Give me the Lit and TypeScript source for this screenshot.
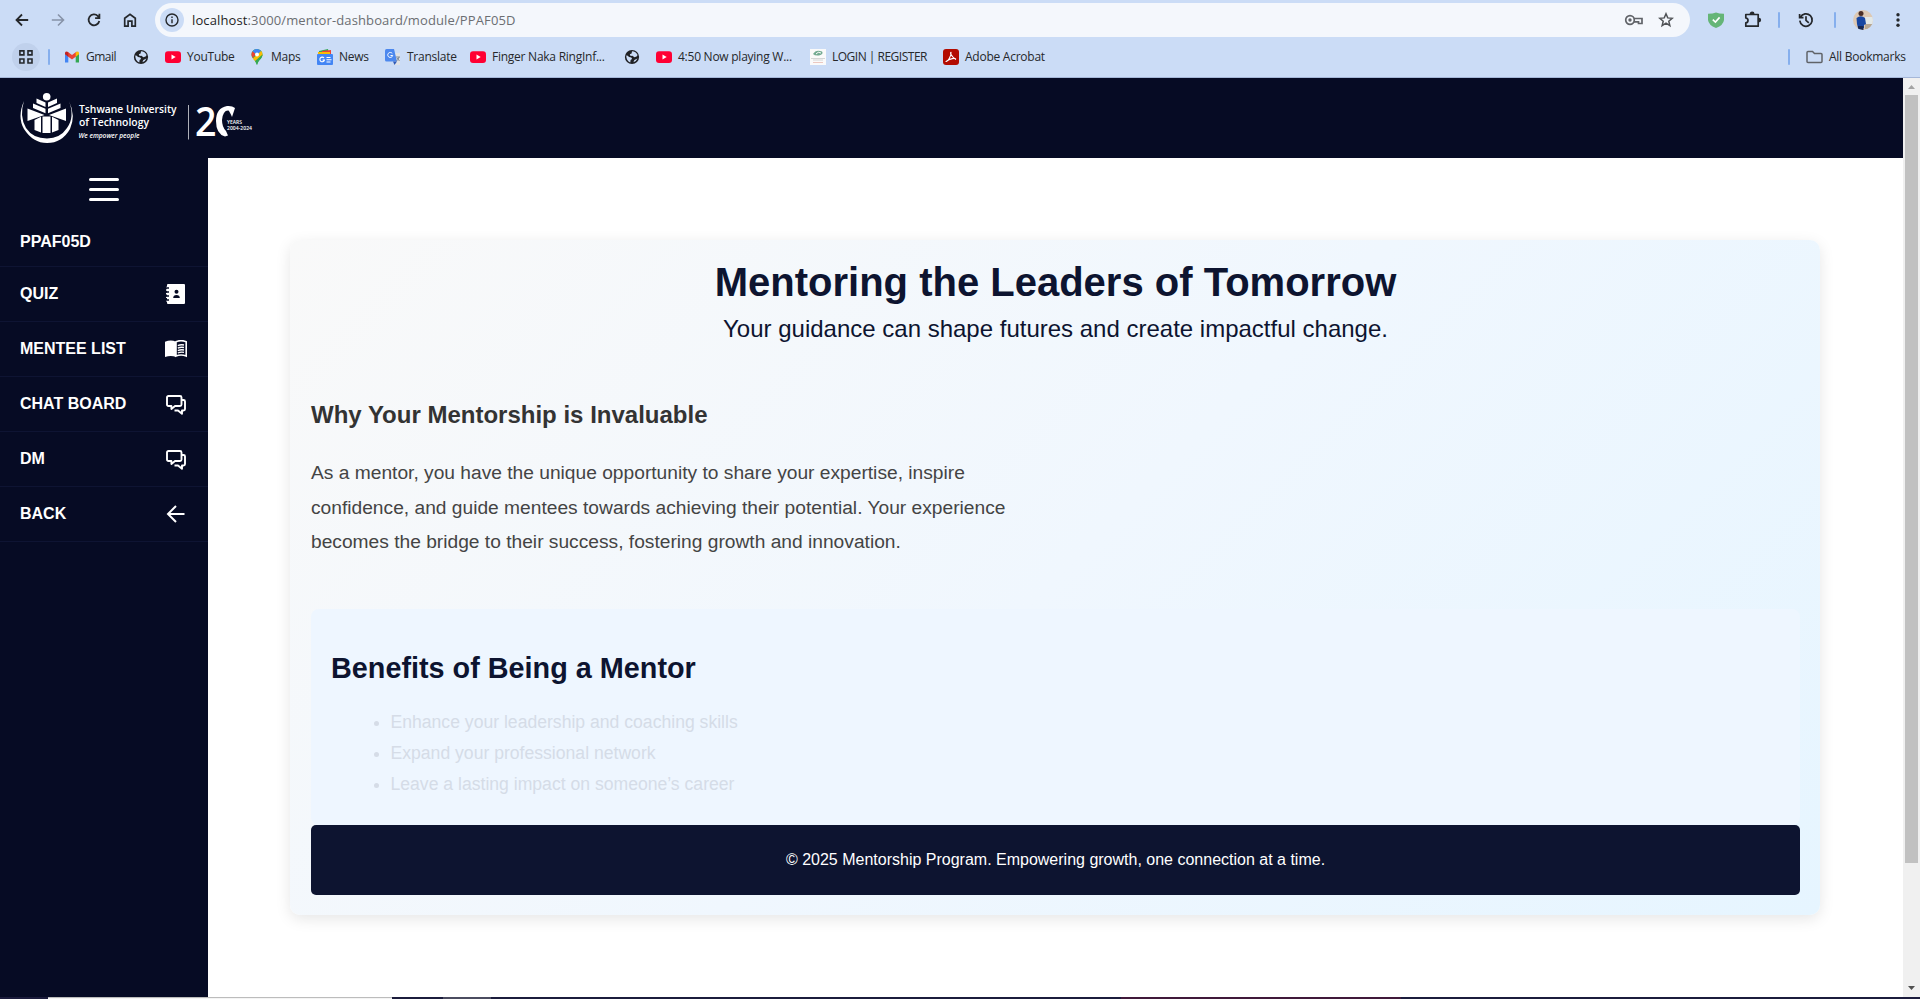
import { LitElement, html, css } from "lit";
import { customElement } from "lit/decorators.js";

const globe = html`<svg width="16" height="16" viewBox="0 0 16 16"><circle cx="8" cy="8" r="7.1" fill="#202124"/><path d="M2.200 6.600Q4 6.600 5 8Q8 8 8 10L6.600 11L6.300 13.600Q2.400 12 2.200 6.600Z M8 2.200Q12 2.400 13.600 6L12.600 7.600L10.400 8.200L8.400 6.800L6.600 7L5.800 5.200L7.600 4.400Z M9.400 13.200L10.400 11L13.400 9.600Q12.600 12.400 9.400 13.200Z" fill="#cbdcf6"/></svg>`;
const youtube = html`<svg width="16" height="16" viewBox="0 0 16 16"><rect y="2.300" width="16" height="11.600" rx="3" fill="#f03"/><path d="M6.500 5.600v5l4.200-2.500z" fill="#fff"/></svg>`;
const chat = html`<svg class="chat" width="20" height="20" viewBox="0 0 20 20" fill="none" stroke="#fff" stroke-width="1.900" stroke-linejoin="round"><path d="M2.500 1h11.500q1.500 0 1.500 1.500v7q0 1.500-1.500 1.500H9l-3.600 3V11H2.500Q1 11 1 9.500v-7Q1 1 2.500 1z"/><path d="M16 5h1.500Q19 5 19 6.500v7.500q0 1.500-1.500 1.500H16v3.300L12 15.500H8.500"/></svg>`;

@customElement("browser-bar")
export class BrowserBar extends LitElement {
  static styles = css`
    :host { display: block; height: 77px; background: #cbdcf6; border-bottom: 1px solid #a5b7d8; font: 12px "Open Sans", "Noto Sans", sans-serif; color: #26282b; overflow: hidden; }
    svg { display: block; flex: none; }
    .bar { display: flex; align-items: center; height: 40px; }
    .nav { display: flex; gap: 16px; padding: 0 14px 0 12px; }
    .omni { display: flex; align-items: center; flex: 1; height: 34px; border-radius: 17px; background: #f4f7fc; padding: 0 16px 0 5px; box-sizing: border-box; margin-left: 1px; }
    .info { width: 24px; height: 24px; border-radius: 50%; background: #cbdcf6; display: grid; place-items: center; margin-right: 8px; }
    .url { flex: 1; font-size: 13px; letter-spacing: 0.12px; color: #6b6e72; }
    .url b { font-weight: 400; color: #1f1f1f; }
    .acts { display: flex; gap: 14px; align-items: center; }
    .tools { display: flex; align-items: center; padding-left: 17px; width: 213px; }
    .sep { width: 2px; height: 16px; background: #86afed; border-radius: 1px; flex: none; }
    .puzzle { margin-left: 18px; }
    .s1 { margin-left: 15px; }
    .hist, .face, .more { margin-left: 17px; }
    .s2 { margin-left: 19px; }
    .s3 { margin-right: 14px; }
    .s4 { margin-right: 16px; }
    .marks { display: flex; align-items: center; height: 34px; }
    .apps { width: 28px; height: 28px; border-radius: 50%; background: #c0d1ec; display: grid; place-items: center; margin: 0 8px 0 12px; }
    .m { display: flex; align-items: center; white-space: nowrap; box-sizing: border-box; }
    .m span { margin: -1px 0 0 6px; letter-spacing: -0.25px; }
    .m .tight { letter-spacing: -0.5px; }
    .fill { flex: 1; }
  `;
  mark(icon: unknown, text: string, width: number, tight = false) {
    return html`<div class="m" style="width:${width}px">${icon}${text ? html`<span class=${tight ? "tight" : ""}>${text}</span>` : ""}</div>`;
  }
  render() {
    return html`
      <div class="bar">
        <div class="nav">
          <svg width="20" height="20" viewBox="0 0 20 20" fill="none" stroke="#25282c" stroke-width="1.800"><path d="M16.200 10H4.800M10 4.500L4.500 10l5.500 5.500"/></svg>
          <svg width="20" height="20" viewBox="0 0 20 20" fill="none" stroke="#8793a8" stroke-width="1.600"><path d="M3.800 10h11.400M10 4.500l5.500 5.500-5.500 5.500"/></svg>
          <svg width="20" height="20" viewBox="0 0 20 20" fill="none" stroke="#25282c" stroke-width="1.800"><path d="M15.300 11a5.400 5.400 0 1 1-1.400-4.900l1.300 1.500M15.400 3.800v4.300h-4.300"/></svg>
          <svg width="20" height="20" viewBox="0 0 20 20" fill="none" stroke="#25282c" stroke-width="1.700"><path d="M4.700 8.200L10 4.200l5.300 4v7.900h-3.400v-4.900H8.100v4.900H4.700z"/></svg>
        </div>
        <div class="omni">
          <div class="info"><svg width="16" height="16" viewBox="0 0 16 16" fill="none" stroke="#25282c" stroke-width="1.400"><circle cx="8" cy="8" r="6"/><path d="M8 7.200v4M8 4.600v1.500"/></svg></div>
          <div class="url"><b>localhost</b>:3000/mentor-dashboard/module/PPAF05D</div>
          <div class="acts">
            <svg width="20" height="16" viewBox="0 0 20 16" fill="none" stroke="#606368" stroke-width="1.700"><circle cx="6" cy="8" r="4.300"/><circle cx="6" cy="8" r="1.700" fill="#606368" stroke="none"/><path d="M10 6.500h8v5h-3.500V9.800H10"/></svg>
            <svg width="16" height="16" viewBox="0 0 16 16" fill="none" stroke="#505357" stroke-width="1.500"><path d="M8 1.800l1.750 4.100 4.450.4-3.400 2.900 1.050 4.400L8 11.200l-3.850 2.400L5.200 9.200 1.800 6.300l4.450-.4z"/></svg>
          </div>
        </div>
        <div class="tools">
          <svg width="18" height="18" viewBox="0 0 18 18"><path d="M9 1.400Q12 2.500 17 2.700V9Q16.500 14 9 17Q1.500 14 1 9V2.700Q6 2.500 9 1.400Z" fill="#65b577"/><path d="M5.800 8.600l2.600 2.500 4.200-4.700" fill="none" stroke="#fff" stroke-width="1.600"/></svg>
          <svg class="puzzle" width="20" height="20" viewBox="0 0 20 20" fill="none" stroke="#25282c" stroke-width="1.700"><path d="M2.800 4.500h12.400v11.700H2.800v-3.300q2.200-.5 2.200-2.500t-2.200-2.500z" stroke-linejoin="round"/><path d="M7.500 4a1.600 1.600 0 0 1 3.200 0zM15.700 8.500a1.600 1.600 0 0 1 0 3.200z" fill="#25282c"/></svg>
          <div class="sep s1"></div>
          <svg class="hist" width="18" height="18" viewBox="0 0 18 18" fill="none" stroke="#25282c" stroke-width="1.700"><path d="M3.400 6.300a6.200 6.200 0 1 1-.6 3.400M2.600 3v3.700h3.900M9 5.300V9.300l2.800 2.500"/></svg>
          <div class="sep s2"></div>
          <svg class="face" width="20" height="20" viewBox="0 0 20 20"><defs><clipPath id="av"><circle cx="10" cy="10" r="10"/></clipPath></defs><g clip-path="url(#av)"><rect width="20" height="20" fill="#ddc9b4"/><path d="M12 7h8v7h-8z" fill="#e2e8e8"/><path d="M12 14h8v5h-8z" fill="#b6a692"/><path d="M3.500 8Q8 4.500 12 8l1 6-2 1v3H5l-1-4z" fill="#1746a2"/><path d="M5 16h5.500v4H5z" fill="#182852"/><circle cx="8" cy="3.500" r="2.500" fill="#4b2e27"/></g></svg>
          <svg class="more" width="18" height="18" viewBox="0 0 18 18" fill="#25282c"><circle cx="8" cy="3.700" r="1.700"/><circle cx="8" cy="9" r="1.700"/><circle cx="8" cy="14.300" r="1.700"/></svg>
        </div>
      </div>
      <div class="marks">
        <div class="apps"><svg width="16" height="16" viewBox="0 0 16 16" fill="none" stroke="#25282c" stroke-width="1.600"><path d="M1.900 1.900h4v4h-4zM10 1.900h4v4h-4zM1.900 10h4v4h-4zM10 10h4v4h-4z"/></svg></div>
        <div class="sep s3"></div>
        ${this.mark(html`<svg width="16" height="16" viewBox="0 0 16 16"><path d="M1 4V13.500h3.300V6z" fill="#4285f4"/><path d="M11.700 6v7.500H15V4z" fill="#34a853"/><path d="M3.300 2.600L8 6.100l4.700-3.500V7L8 10.400 3.300 7z" fill="#ea4335"/><path d="M11.700 3.400Q15 1 15 4.500V5.200L11.700 7.700z" fill="#fbbc04"/><path d="M1 4.500Q1 1 4.300 3.400V7.700L1 5.200z" fill="#c5221f"/></svg>`, "Gmail", 69, true)}
        ${this.mark(globe, "", 32)}
        ${this.mark(youtube, "YouTube", 84)}
        ${this.mark(html`<svg width="16" height="16" viewBox="0 0 16 16"><path d="M8 0a5.500 5.500 0 0 1 5.500 5.500c0 4-4 5-5.500 10.500C6.500 10.500 2.500 9.500 2.500 5.500A5.500 5.500 0 0 1 8 0z" fill="#34a853"/><path d="M3.700 9.400L12 1.800Q14 4 13.300 7L7 13z" fill="#fbbc04"/><path d="M3.600 2.300L7 5 3.700 9Q1.200 5 3.600 2.300z" fill="#ea4335"/><path d="M3.600 2.300Q7.500-2 12 1.800L8 6z" fill="#4285f4"/><circle cx="8" cy="5.500" r="2" fill="#fff"/><path d="M8 16c1.500-5.500 5.500-6.500 5.500-10.500L6 12z" fill="#34a853"/></svg>`, "Maps", 68)}
        ${this.mark(html`<svg width="16" height="16" viewBox="0 0 16 16"><path d="M2 2l9-2 1 5H2z" fill="#34a853"/><path d="M5 2l9-1v5H5z" fill="#ea4335"/><path d="M1 3h12v4H1z" fill="#fbbc04"/><rect y="5" width="16" height="11" rx="1" fill="#4285f4"/><path d="M7 9a2.300 2.300 0 1 0 .4 2H5.500M9.500 8.500h4M9.500 10.700h5M9.500 13h4" fill="none" stroke="#fff" stroke-width="1.100"/></svg>`, "News", 68)}
        ${this.mark(html`<svg width="16" height="16" viewBox="0 0 16 16"><path d="M7 4h8v12H9z" fill="#e0e2e5"/><path d="M1.500 0H9l3 12.500H1.500Q0 12.500 0 11V1.500Q0 0 1.500 0z" fill="#4c88ee"/><path d="M8 12.500h4L9.500 16z" fill="#2f5bb9"/><path d="M7.300 4.500a2.500 2.500 0 1 0 .4 2H5.500" fill="none" stroke="#fff"/><path d="M11 8H15M14 8q-.5 2.500-2.500 4M12 9l2.500 3" fill="none" stroke="#77818e" stroke-width=".9"/></svg>`, "Translate", 85)}
        ${this.mark(youtube, "Finger Naka RingInf...", 154)}
        ${this.mark(globe, "", 32)}
        ${this.mark(youtube, "4:50 Now playing W...", 154)}
        ${this.mark(html`<svg width="16" height="16" viewBox="0 0 16 16"><path d="M0 0h16v16H0z" fill="#fafafa"/><path d="M3 5q3-5 9-2.500Q14 5 9 6.500 5 7 3 5z" fill="#73aa91"/><path d="M6 5q2-3 5-1" stroke="#fff" fill="none"/><path d="M1 9.500h14M3 11h10" stroke="#c9cccb" stroke-width=".8"/><path d="M3 13.500h10" stroke="#e7bbb2" stroke-width=".8"/></svg>`, "LOGIN | REGISTER", 133, true)}
        ${this.mark(html`<svg width="16" height="16" viewBox="0 0 16 16"><rect width="16" height="16" rx="3" fill="#b30b00"/><path d="M3.300 12.400c1.500.3 5.200-5.500 4.700-9-1-.2-.5 3.500 4.600 6.800.5-1.500-6-.7-9.300 2.200z" fill="none" stroke="#fff" stroke-width="1.100"/></svg>`, "Adobe Acrobat", 120)}
        <div class="fill"></div>
        <div class="sep s4"></div>
        ${this.mark(html`<svg width="17" height="16" viewBox="0 0 17 16" fill="none" stroke="#606368" stroke-width="1.500"><path d="M2 2.500h4.500l2 2H15q1 0 1 1v7q0 1-1 1H2q-1 0-1-1v-9q0-1 1-1z"/></svg>`, "All Bookmarks", 114)}
      </div>`;
  }
}

@customElement("tut-logo")
export class TutLogo extends LitElement {
  static styles = css`
    :host { display: flex; align-items: center; height: 80px; padding-left: 19px; color: #fff; }
    svg { display: block; overflow: visible; }
    text { fill: #fff; }
    .name { font: 600 10.5px "Open Sans", sans-serif; }
    .tag { font: italic 600 7px "Open Sans", sans-serif; }
    .big { font: 600 40px "Open Sans", sans-serif; }
    .yr { font: 600 4.500px "Open Sans", sans-serif; }
  `;
  render() {
    return html`<svg width="240" height="56" viewBox="19 90 240 56" fill="#fff">
      <path d="M24 101Q17 117 24 129Q33 143 47 143Q62 143 70 129Q76 116 69 101Q75 117 67 128Q60 138.500 47 138.500Q33 138.500 26 128Q19 116 24 101Z"/>
      <circle cx="46.700" cy="96.700" r="3.800"/>
      <path d="M36.500 98.500l9 4v4.500l-9-4zM57 98.500l-9 4v4.500l9-4zM33 103.500l12.500 5.200v4.500L33 108zM60.500 103.500L48 108.700v4.500L60.500 108zM27.500 108.500l17 6.500-17 6zM66 108.500l-17 6.500 17 6z"/>
      <path d="M34.500 120l6.500-3.200V132.500l-6.500-2.500zM42.500 116.500h8V133h-8zM52 116.800l6.500 3.200v10l-6.500 2.500z"/>
      <text class="name" x="79" y="113" textLength="97.500" lengthAdjust="spacingAndGlyphs">Tshwane University</text>
      <text class="name" x="79" y="125.500" textLength="70" lengthAdjust="spacingAndGlyphs">of Technology</text>
      <text class="tag" x="78.500" y="138" textLength="61" lengthAdjust="spacingAndGlyphs">We empower people</text>
      <path d="M188 105h1v34.500h-1z" fill="#aeb0b9"/>
      <text class="big" x="195" y="136" textLength="21.500" lengthAdjust="spacingAndGlyphs">2</text>
      <path d="M235 108Q232 105.500 227 106Q216 108 216 121Q216 134 225 136.500L228 135.500L226 131Q222 127 222 120Q223 110 228.500 110.500Q230 112 232 117Z"/>
      <text class="yr" x="227" y="123.500" textLength="15" lengthAdjust="spacingAndGlyphs">YEARS</text>
      <text class="yr" x="227" y="130" textLength="25" lengthAdjust="spacingAndGlyphs">2004-2024</text>
    </svg>`;
  }
}

@customElement("side-menu")
export class SideMenu extends LitElement {
  static styles = css`
    :host { display: block; width: 208px; background: #060b24; color: #fff; font: bold 16px "Liberation Sans", Arial, sans-serif; }
    .burger { display: flex; flex-direction: column; align-items: center; gap: 7px; padding: 20px 0; height: 23px; }
    .burger i { width: 30px; height: 3px; border-radius: 2px; background: #fff; }
    .row { display: flex; align-items: center; justify-content: space-between; height: 54px; border-bottom: 1px solid #0e1433; padding: 0 21px 0 20px; }
    .first { height: 45px; align-items: flex-start; }
    .first span { padding-top: 12px; }
    .row span { white-space: nowrap; }
    svg { display: block; }
    .chat { margin: 1px 1px 0 0; }
  `;
  render() {
    const items: [string, unknown][] = [
      ["QUIZ", html`<svg width="22" height="22" viewBox="0 0 22 22"><path d="M3 1h16q1 0 1 1v18q0 1-1 1H3q-1 0-1-1v-1.500H1V17h1v-2H1v-1.600h1v-2H1V9.800h1v-2H1V6.200h1v-1H1V3.700h1V2q0-1 1-1z" fill="#fff"/><path d="M1 5h3M1 9h3M1 13h3M1 17h3" stroke="#060b24" stroke-width="1.300"/><circle cx="11.500" cy="8.800" r="2" fill="#060b24"/><path d="M8.200 15q0-3 3.300-3t3.300 3z" fill="#060b24"/></svg>`],
      ["MENTEE LIST", html`<svg width="22" height="18" viewBox="0 0 22 18"><path d="M0 1.800Q6-.8 11 1.800V17Q6 14.800 0 17z" fill="#fff"/><path d="M11 1.800Q16-.6 21.200 1.800V16Q16 14 11 16z" fill="none" stroke="#fff" stroke-width="1.600"/><path d="M12.800 5.600q3-1.300 6.200-.6M12.800 8.100q3-1.300 6.200-.6M12.800 10.600q3-1.300 6.200-.6M12.800 13q3-1.300 6.200-.6" fill="none" stroke="#fff" stroke-width="1.300"/></svg>`],
      ["CHAT BOARD", chat],
      ["DM", chat],
      ["BACK", html`<svg width="22" height="22" viewBox="0 0 22 22" fill="none" stroke="#fff" stroke-width="2"><path d="M19.500 11H3.500M11 3L3 11l8 8"/></svg>`],
    ];
    return html`
      <div class="burger"><i></i><i></i><i></i></div>
      <div class="row first"><span>PPAF05D</span></div>
      ${items.map(([t, i]) => html`<div class="row"><span>${t}</span>${i}</div>`)}`;
  }
}

@customElement("mentor-page")
export class MentorPage extends LitElement {
  static styles = css`
    :host { display: block; flex: 1; background: #fff; padding: 82px 83px 0 82px; font-family: "Liberation Sans", Arial, sans-serif; }
    .card { box-sizing: border-box; height: 675px; padding: 20px 20px 20px 21px; border-radius: 10px; background: linear-gradient(135deg, #f9f9f9, #f0f7fe 50%, #e6f5ff); box-shadow: 0 4px 15px rgba(0, 0, 0, .1); }
    h1 { margin: 0; font-size: 40px; line-height: 44px; text-align: center; color: #0d1430; }
    .sub { margin: 11px 0 0; font-size: 24px; line-height: 27px; text-align: center; color: #0d1430; }
    h2 { margin: 59px 0 0; font-size: 24px; line-height: 27px; color: #333; }
    .why { margin: 28.300px 0 0; width: 720px; font-size: 19.200px; line-height: 34.560px; color: #444; }
    .benefits { box-sizing: border-box; height: 216px; margin-top: 49px; padding: 42px 20px 0; border-radius: 8px; background: #eef6ff; }
    h3 { margin: 0; font-size: 28.800px; line-height: 34px; color: #0d1430; }
    ul { margin: 22.500px 0 0; padding-left: 60px; padding-left: 59.500px; color: #d5dce7; font-size: 17.600px; line-height: 31px; }
    .foot { height: 70px; border-radius: 5px; background: #0d1430; color: #fff; font-size: 16px; line-height: 70px; text-align: center; }
  `;
  render() {
    return html`<div class="card">
      <h1>Mentoring the Leaders of Tomorrow</h1>
      <p class="sub">Your guidance can shape futures and create impactful change.</p>
      <h2>Why Your Mentorship is Invaluable</h2>
      <p class="why">As a mentor, you have the unique opportunity to share your expertise, inspire confidence, and guide mentees towards achieving their potential. Your experience becomes the bridge to their success, fostering growth and innovation.</p>
      <div class="benefits">
        <h3>Benefits of Being a Mentor</h3>
        <ul><li>Enhance your leadership and coaching skills</li><li>Expand your professional network</li><li>Leave a lasting impact on someone’s career</li></ul>
      </div>
      <div class="foot">© 2025 Mentorship Program. Empowering growth, one connection at a time.</div>
    </div>`;
  }
}

@customElement("app-root")
export class AppRoot extends LitElement {
  static styles = css`
    :host { display: flex; flex-direction: column; width: 1920px; height: 999px; overflow: hidden; }
    .view { display: flex; flex: 1; min-height: 0; }
    .site { display: flex; flex-direction: column; flex: 1; background: #060b24; }
    .body { display: flex; flex: 1; }
    .scroll { width: 17px; background: #f0f0f0; display: flex; flex-direction: column; align-items: center; justify-content: space-between; }
    .scroll svg { display: block; }
    .thumb { width: 13px; height: 768px; background: #c1c1c1; }
    .gap { flex: 1; }
    .task { display: flex; height: 2px; background: #1b1c3c; }
    .t1 { width: 48px; }
    .t2 { width: 344px; background: #f4f4f4; border-top: 1px solid #bcbcbc; box-sizing: border-box; }
    .t3 { width: 51px; }
    .t4 { width: 48px; background: #4b4c60; }
    .t5 { width: 630px; }
    .t6 { width: 280px; background: #40193a; }
  `;
  render() {
    return html`<browser-bar></browser-bar>
      <div class="view">
        <div class="site"><tut-logo></tut-logo><div class="body"><side-menu></side-menu><mentor-page></mentor-page></div></div>
        <div class="scroll">
          <svg width="17" height="17" viewBox="0 0 17 17"><path d="M5 11h7L8.500 7z" fill="#a3a3a3"/></svg>
          <div class="thumb"></div><div class="gap"></div>
          <svg width="17" height="17" viewBox="0 0 17 17"><path d="M5 6h7l-3.500 4z" fill="#505050"/></svg>
        </div>
      </div>
      <div class="task"><div class="t1"></div><div class="t2"></div><div class="t3"></div><div class="t4"></div><div class="t5"></div><div class="t6"></div></div>`;
  }
}
